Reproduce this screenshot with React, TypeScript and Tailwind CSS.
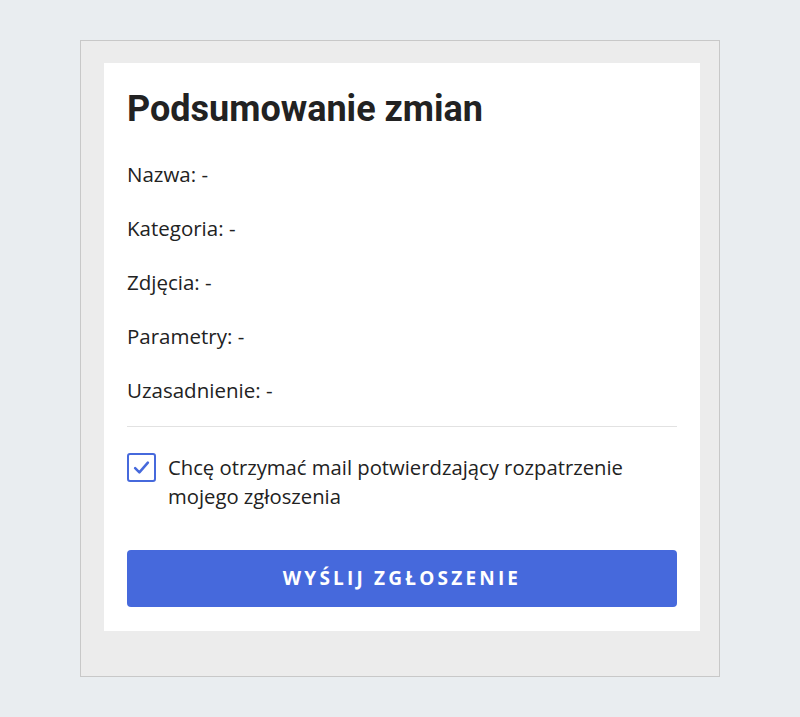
import { useState } from "react";

const fields = ["Nazwa", "Kategoria", "Zdjęcia", "Parametry", "Uzasadnienie"];

export default function App() {
  const [confirmMail, setConfirmMail] = useState(true);

  return (
    <div className="min-h-[717px] bg-[#e9edf0] pt-10 px-20 font-['Open_Sans',sans-serif]">
      <div className="border border-[#c8c8c8] bg-[#ececec] pt-[22px] pl-[23px] pr-[19px] pb-[45px]">
        <div className="bg-white px-[23px] pt-[26px] pb-[24px]">
          <h1 className="font-['Roboto',sans-serif] text-[36px] font-bold leading-[40px] text-[#222]">
            Podsumowanie zmian
          </h1>

          <div className="mt-[33px] flex flex-col gap-[30px] text-[20.5px] leading-[24px] text-[#222]">
            {fields.map((f) => (
              <p key={f}>{f}: -</p>
            ))}
          </div>

          <div className="mt-[24px] h-px bg-[#e2e2e2]" />

          <label className="mt-[26px] flex items-start gap-[12px] cursor-pointer">
            <button
              type="button"
              onClick={() => setConfirmMail(!confirmMail)}
              className="flex h-[29px] w-[29px] shrink-0 items-center justify-center rounded-[3px] border-2 border-[#4669dc] bg-white"
            >
              {confirmMail && (
                <svg width="17" height="15" viewBox="0 0 16 14" fill="none">
                  <path d="M2 7.5 L6 11.5 L14 2.5" stroke="#4669dc" strokeWidth="2.4" strokeLinecap="round" strokeLinejoin="round" />
                </svg>
              )}
            </button>
            <span className="text-[20.25px] leading-[29px] text-[#222]">
              Chcę otrzymać mail potwierdzający rozpatrzenie mojego zgłoszenia
            </span>
          </label>

          <button
            type="button"
            className="mt-[39px] h-[57px] w-full rounded-[4px] bg-[#4669dc] text-[19px] font-bold uppercase tracking-[3.2px] text-white"
          >
            Wyślij zgłoszenie
          </button>
        </div>
      </div>
    </div>
  );
}
